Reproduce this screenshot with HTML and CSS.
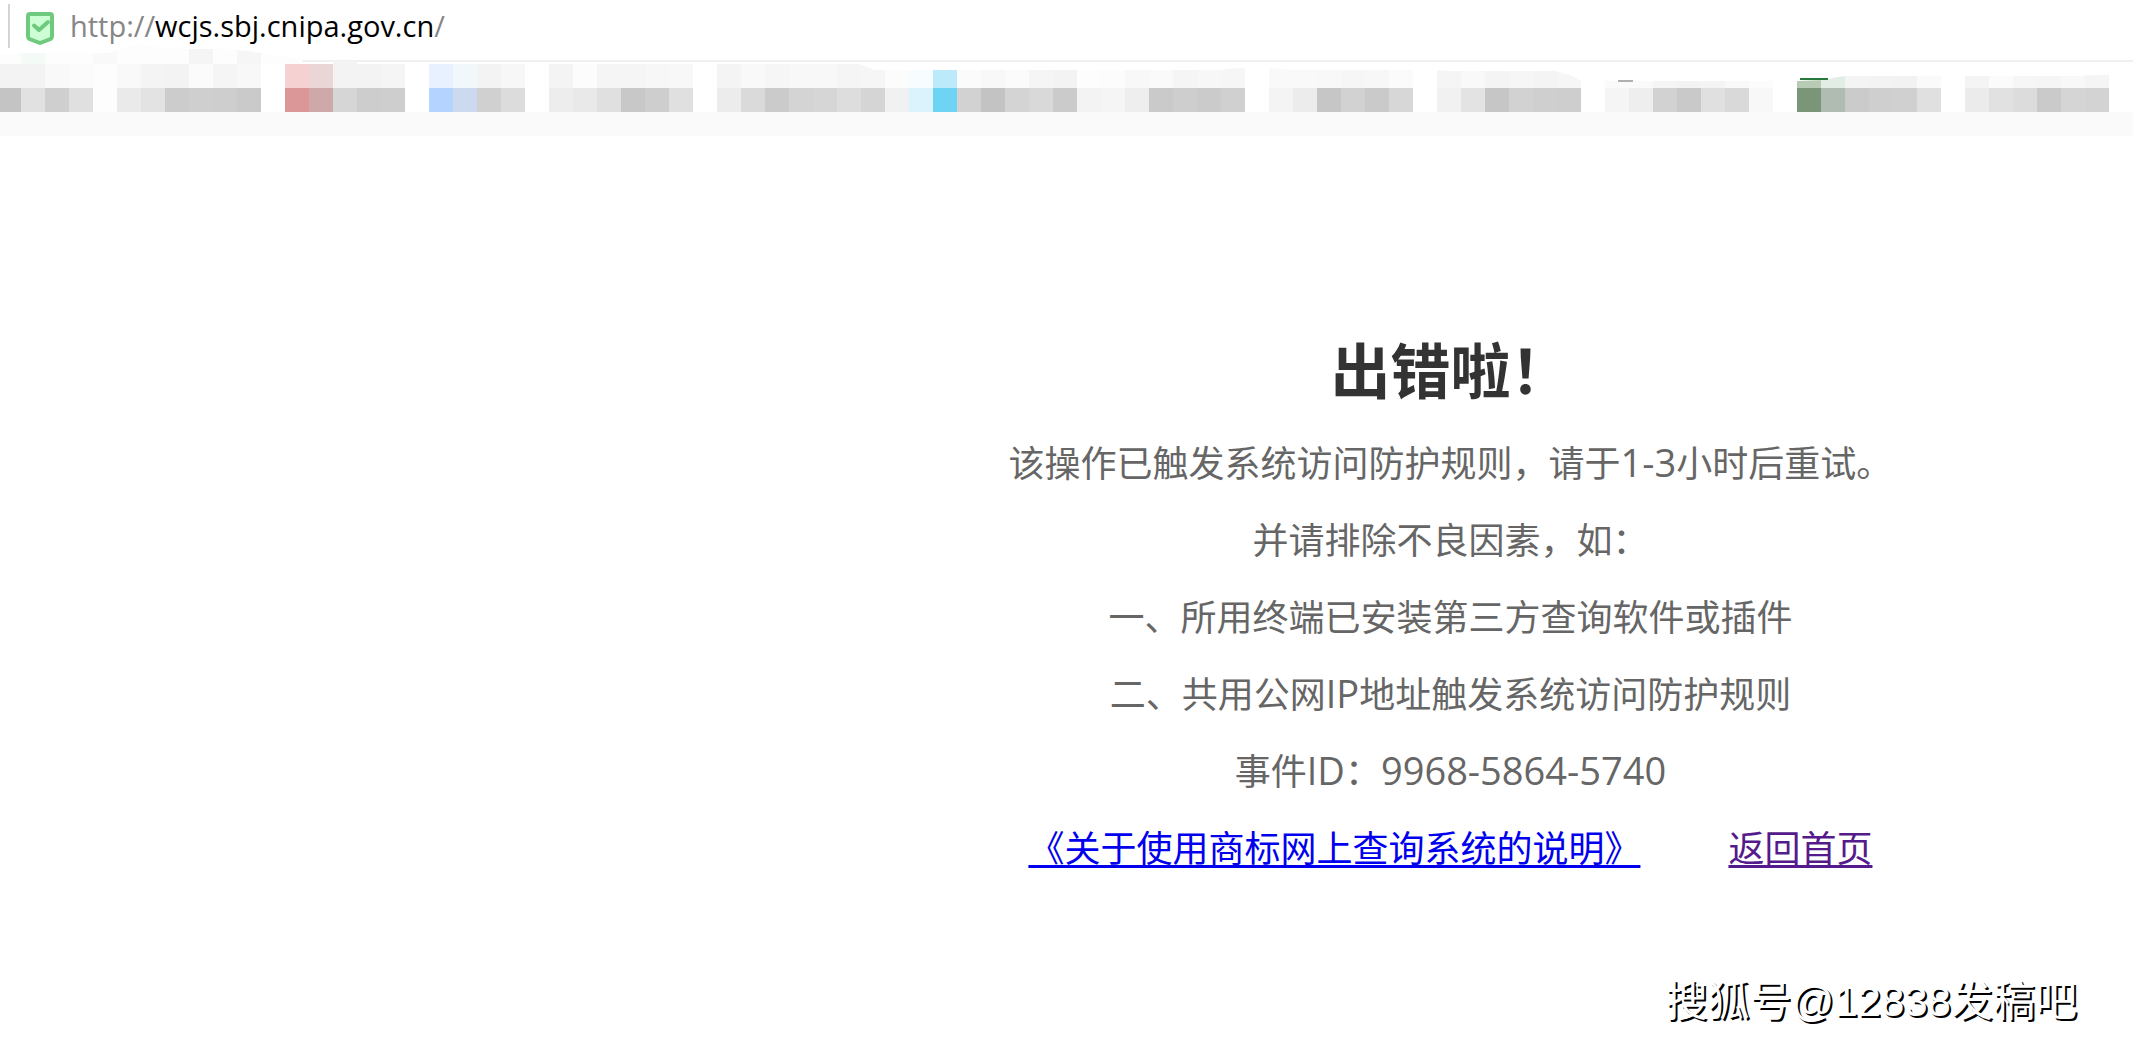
FILE: index.html
```html
<!DOCTYPE html>
<html lang="zh-CN">
<head>
<meta charset="utf-8">
<title>出错啦！</title>
<link rel="stylesheet" href="styles.css">
</head>
<body>
<header class="browser">
  <div class="address">
    <span class="divider"></span>
    <svg class="shield" viewBox="0 0 28 33" aria-hidden="true">
      <path d="M4 2H24Q26 2 26 4V24.500Q26 26 24.500 27L15.500 30.500Q14 31.200 12.500 30.500L3.500 27Q2 26 2 24.500V4Q2 2 4 2Z" fill="#ccffd4" stroke="#6fc97e" stroke-width="4"/>
      <path d="M8 13.500L13 18L22 10" fill="none" stroke="#6fc97e" stroke-width="4" stroke-linecap="round" stroke-linejoin="round"/>
    </svg>
    <div class="url">http://<span class="host">wcjs.sbj.cnipa.gov.cn</span>/</div>
  </div>
  <svg class="bookmarks" id="bookmarks" viewBox="0 40 2133 96" preserveAspectRatio="xMinYMin slice" aria-hidden="true">
    <defs>
      <clipPath id="edge"><path d="M0 55L20 53H110C125 48 125 45 140 45C155 45 158 49 175 49H225C250 51 270 54 285 57L302 60V61H390V64H858Q866 66 874 70H1220Q1230 68 1245 68H1270Q1282 69 1292 70H1435L1448 71H1555Q1568 73 1581 81H1797L1825 80Q1835 77 1845 76H2080Q2090 74 2133 75V136H0Z"/></clipPath>
    </defs>
    <path d="M302 61H2133" stroke="#f0f0f0" stroke-width="2"/>
    <g clip-path="url(#edge)">
      <path d="M0 40H300V64H0ZM93 64H117V112H93Z" fill="#fdfdfd"/>
      <g id="tiles" shape-rendering="crispEdges"></g>
    </g>
    <path d="M1618 81H1633" stroke="#b0b0b0" stroke-width="2"/>
    <path d="M1800 79H1828" stroke="#287a3c" stroke-width="2"/>
    <path d="M0 112H2133V136H0Z" fill="#fafafa"/>
  </svg>
</header>
<main class="error">
  <h1>出错啦！</h1>
  <p>该操作已触发系统访问防护规则，请于<span class="latin">1-3</span>小时后重试。</p>
  <p>并请排除不良因素，如：</p>
  <p>一、所用终端已安装第三方查询软件或插件</p>
  <p>二、共用公网<span class="latin">IP</span>地址触发系统访问防护规则</p>
  <p>事件<span class="latin">ID</span>：<span class="latin">9968-5864-5740</span></p>
  <p class="links"><a href="#notice">《关于使用商标网上查询系统的说明》</a><a class="visited" href="#home">返回首页</a></p>
</main>
<footer class="credit">搜狐号<span class="account">@12838</span>发稿吧</footer>
<script src="tiles.js"></script>
</body>
</html>
```
FILE: styles.css
```css
* { box-sizing: border-box; }
body {
  margin: 0;
  background: #fff;
  color: #666;
  font-family: "Noto Sans CJK SC", sans-serif;
  min-height: 100vh;
  display: flex;
  flex-direction: column;
}
.address {
  height: 40px;
  padding-left: 8px;
  display: flex;
  align-items: flex-start;
}
.divider {
  width: 2px;
  height: 44px;
  margin-top: 4px;
  background: #d4d4d4;
  flex: none;
  position: relative;
}
.shield {
  width: 28px;
  height: 33px;
  margin: 12px 16px 0;
  flex: none;
}
.url {
  font: 29px/40px "Open Sans", sans-serif;
  padding-top: 6px;
  color: #868686;
  position: relative;
}
.host { color: #000; }
.bookmarks {
  display: block;
  width: 100%;
  height: 96px;
}
.error {
  margin-left: 36%;
  padding-top: 184px;
  text-align: center;
  font-size: 36px;
  line-height: 77px;
}
h1 {
  margin: 0;
  color: #333;
  font-size: 60px;
  line-height: 96px;
}
p { margin: 0; }
h1 + p { margin-top: 7px; }
.latin {
  font-family: "Open Sans", sans-serif;
  font-size: 38px;
  line-height: 1;
}
.links {
  display: flex;
  justify-content: center;
  gap: 88px;
}
a {
  color: #00e;
  text-decoration-thickness: 3px;
  text-underline-offset: 3px;
  text-decoration-skip-ink: none;
}
.visited { color: #551a8b; }
.credit {
  margin-top: auto;
  padding: 0 56px 19px 0;
  text-align: right;
  font-size: 42px;
  line-height: 60px;
  color: #fff;
  text-shadow: 2px 2px 0 #000;
}
.account {
  font-family: "Liberation Sans", sans-serif;
  line-height: 1;
}
```
FILE: tiles.js
```js
// Colours of the bookmark tiles, left to right; "-" leaves a gap.
const rows = [
  { y: 40, colors: "- f4faf6 - - f9f9f9 - - - f5f5f5 - f6f6f6 - - - f4f4f4" },
  { y: 64, colors: "f3f3f3 f3f3f3 f9f9f9 fbfbfb - f9f9f9 f4f4f4 f3f3f3 fbfbfb f5f5f5 f8f8f8 - f6d1d2 ead5d7 f3f3f3 f3f3f3 f5f5f5 - e8f1ff f2f7fb f3f3f3 f7f7f7 - f4f4f4 fcfcfc f5f5f5 f5f5f5 f7f7f7 f8f8f8 - f4f4f4 f9f9f9 f6f6f6 f8f8f8 f8f8f8 f5f5f5 f6f6f6 fcfcfc f7fcff bdeafa fbfbfb f8f8f8 fbfbfb f5f5f5 f3f3f3 fdfdfd fcfcfc f8f8f8 fafafa f5f5f5 f7f7f7 f6f6f6 - f9f9f9 f9f9f9 f8f8f8 f6f6f6 f7f7f7 fbfbfb - f5f5f5 f9f9f9 f4f4f4 f6f6f6 f4f4f4 f6f6f6 - fafafa fafafa f5f5f5 f3f3f3 f4f4f4 f9f9f9 fcfcfc - b7cbb5 e2ede5 f4f4f4 f3f3f3 f2f2f2 fafafa - f4f4f4 fbfbfb f6f6f6 f5f5f5 f8f8f8 f5f5f5" },
  { y: 88, colors: "c4c4c4 e1e1e1 cfcfcf e0e0e0 - eaeaea e3e3e3 cccccc cfcfcf cecece cacaca - db9697 cfa8a9 d6d6d6 cdcdcd cecece - b5d3ff ccd9ee d0d0d0 dcdcdc - ededed e9e9e9 e0e0e0 c8c8c8 cecece e0e0e0 - ececec dadada cbcbcb d4d4d4 d6d6d6 dddddd d5d5d5 f1f1f1 daf3fc 6fd4f4 d2d2d2 c3c3c3 d4d4d4 d9d9d9 cbcbcb f3f3f3 f5f5f5 eeeeee cacaca cecece cbcbcb d0d0d0 - f4f4f4 ececec c6c6c6 d2d2d2 cacaca d7d7d7 - f1f1f1 e3e3e3 c6c6c6 d2d2d2 cfcfcf cecece - f5f5f5 eeeeee d2d2d2 c9c9c9 e0e0e0 d9d9d9 f8f8f8 - 7a9577 b0bbb1 cbcbcb cfcfcf d0d0d0 e0e0e0 - ebebeb e1e1e1 dcdcdc cacaca d5d5d5 d3d3d3" }
];
const tiles = document.getElementById("tiles");
for (const { y, colors } of rows) {
  colors.split(" ").forEach((color, i) => {
    if (color === "-") return;
    const rect = document.createElementNS("http://www.w3.org/2000/svg", "rect");
    rect.setAttribute("x", i * 24 - 3);
    rect.setAttribute("y", y);
    rect.setAttribute("width", 24);
    rect.setAttribute("height", 24);
    rect.setAttribute("fill", "#" + color);
    tiles.append(rect);
  });
}
```
